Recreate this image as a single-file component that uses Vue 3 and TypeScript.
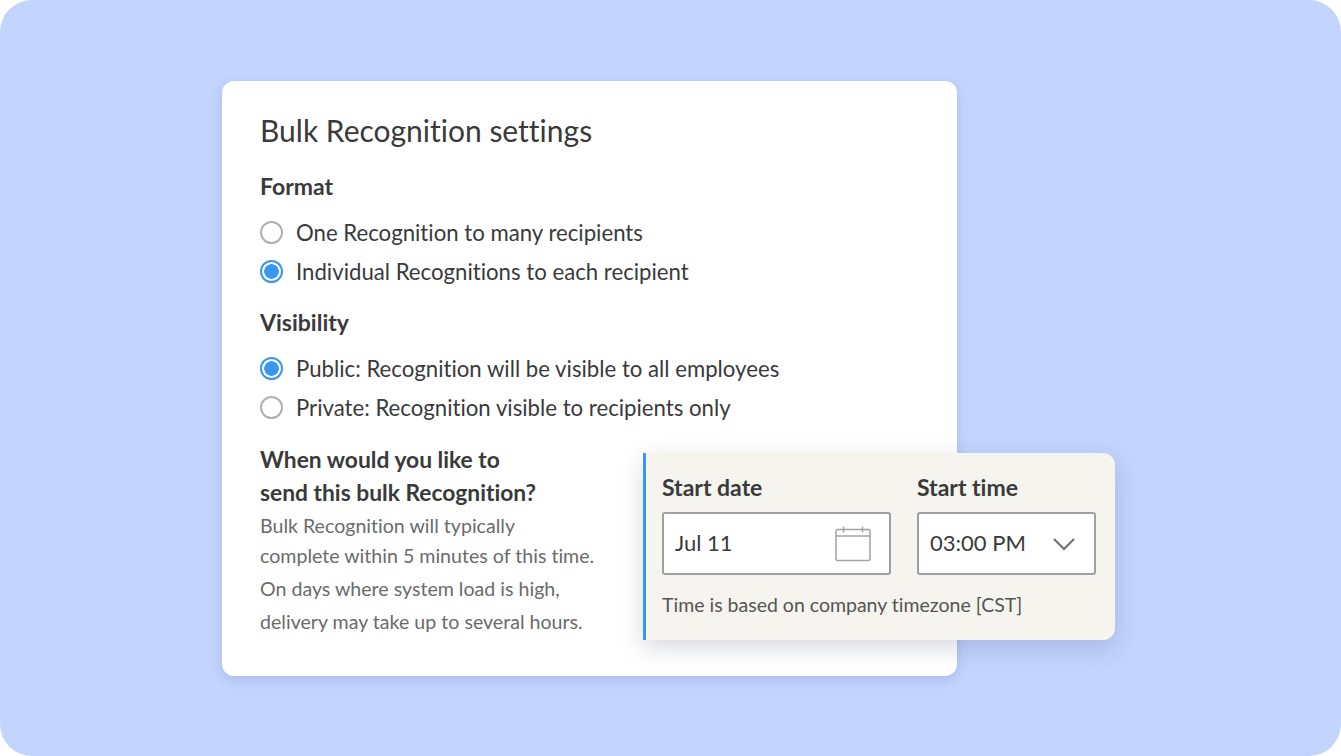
<script setup lang="ts">
const formats = [
  { label: "One Recognition to many recipients", on: false },
  { label: "Individual Recognitions to each recipient", on: true },
];
const visibility = [
  { label: "Public: Recognition will be visible to all employees", on: true },
  { label: "Private: Recognition visible to recipients only", on: false },
];
const notes = [
  "Bulk Recognition will typically",
  "complete within 5 minutes of this time.",
  "On days where system load is high,",
  "delivery may take up to several hours.",
];
</script>

<template>
  <div class="page">
    <div class="card">
      <h1 class="title">Bulk Recognition settings</h1>

      <div class="group-label first">Format</div>
      <ul class="radios">
        <li v-for="r in formats" :key="r.label" class="radio-row">
          <span class="radio" :class="{ on: r.on }"></span>
          <span>{{ r.label }}</span>
        </li>
      </ul>

      <div class="group-label second">Visibility</div>
      <ul class="radios">
        <li v-for="r in visibility" :key="r.label" class="radio-row">
          <span class="radio" :class="{ on: r.on }"></span>
          <span>{{ r.label }}</span>
        </li>
      </ul>

      <div class="when">When would you like to<br />send this bulk Recognition?</div>
      <p v-for="n in notes" :key="n" class="note">{{ n }}</p>

      <div class="popup">
        <div class="fields">
          <div class="field">
            <div class="field-label">Start date</div>
            <div class="input date">
              <span>Jul 11</span>
              <svg width="36" height="36" viewBox="0 0 36 36" fill="none" stroke="#a3a3a3" stroke-width="1.5">
                <rect x="1" y="3.500" width="34" height="31" rx="1.500" />
                <path d="M1 10h34M8.500 0.500v6M27.500 0.500v6" />
              </svg>
            </div>
          </div>
          <div class="field">
            <div class="field-label">Start time</div>
            <div class="input time">
              <span>03:00 PM</span>
              <svg width="24" height="14" viewBox="0 0 24 14" fill="none" stroke="#6e6e6e" stroke-width="2">
                <path d="M2 2l10 10L22 2" />
              </svg>
            </div>
          </div>
        </div>
        <div class="tz">Time is based on company timezone [CST]</div>
      </div>
    </div>
  </div>
</template>

<style>
html, body { margin: 0; background: #fff; }
</style>

<style scoped>
.page {
  width: 1341px;
  height: 756px;
  box-sizing: border-box;
  padding: 81px 0 0 222px;
  background: #c3d4ff;
  border-radius: 32px;
  font-family: Lato, sans-serif;
  font-variant-ligatures: none;
  color: #3a3a3a;
  overflow: hidden;
}
.card {
  position: relative;
  width: 735px;
  height: 595px;
  box-sizing: border-box;
  padding: 29px 0 0 38px;
  background: #fff;
  border-radius: 12px;
  box-shadow: 0 4px 12px rgba(70, 90, 140, 0.2);
}
.title { margin: 0; font-size: 30px; line-height: 40px; font-weight: 400; }
.group-label { font-size: 23px; line-height: 30px; font-weight: 700; }
.group-label.first { margin-top: 21px; }
.group-label.second { margin-top: 16px; }
.radios { list-style: none; margin: 12px 0 0; padding: 0; }
.radio-row {
  display: flex;
  align-items: center;
  gap: 13px;
  height: 39px;
  font-size: 22.200px;
}
.radio {
  width: 23px;
  height: 23px;
  box-sizing: border-box;
  border: 2px solid #b0b0b0;
  border-radius: 50%;
  background: #fff;
}
.radio.on {
  border: 2px solid #3a96f2;
  background: radial-gradient(circle, #3a96f2 0 7px, #fff 7.500px);
}
.when { margin-top: 16px; font-size: 22.800px; line-height: 33px; font-weight: 700; }
.note { margin: 0; font-size: 19.600px; line-height: 33px; color: #6b6b6b; }
.note:first-of-type { margin-bottom: -3px; }
.popup {
  position: absolute;
  left: 421px;
  top: 372px;
  width: 472px;
  height: 187px;
  box-sizing: border-box;
  padding: 19px 19px 0 16px;
  background: #f5f4ef;
  border-left: 3px solid #3a96f2;
  border-radius: 0 12px 12px 0;
  box-shadow: 0 8px 24px rgba(40, 50, 80, 0.18);
}
.fields { display: flex; gap: 26px; }
.field-label { font-size: 23px; line-height: 30px; font-weight: 700; }
.input {
  display: flex;
  align-items: center;
  justify-content: space-between;
  height: 63px;
  margin-top: 10px;
  box-sizing: border-box;
  background: #fff;
  border: 2px solid #a0a0a0;
  border-radius: 3px;
  font-size: 22px;
}
.input span { position: relative; top: -1px; }
.date { width: 229px; padding: 0 18px 0 11px; }
.time { width: 179px; padding: 0 18px 0 11px; }
.tz { margin-top: 17px; font-size: 19.500px; line-height: 26px; color: #555; }
</style>
